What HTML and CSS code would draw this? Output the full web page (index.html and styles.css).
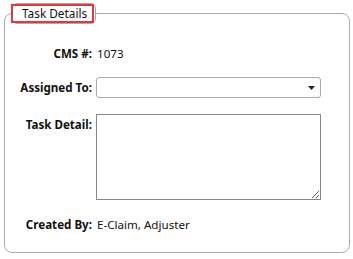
FILE: index.html
```html
<!DOCTYPE html>
<html lang="en">
<head>
  <meta charset="UTF-8" />
  <title>Task Details</title>
  <link rel="stylesheet" href="styles.css">
</head>
<body>
  <fieldset class="panel">
    <legend class="panel-title"><span class="highlight">Task Details</span></legend>

    <div class="row">
      <label class="label">CMS #:</label>
      <span class="value">1073</span>
    </div>

    <div class="row">
      <label class="label" for="assigned">Assigned To:</label>
      <div class="select">
        <svg class="caret" width="7" height="4" viewBox="0 0 7 4"><path d="M0 0h7L3.5 4z" fill="#222"/></svg>
      </div>
    </div>

    <div class="row row-top">
      <label class="label label-top" for="detail">Task Detail:</label>
      <textarea id="detail" class="detail"></textarea>
    </div>

    <div class="row">
      <label class="label">Created By:</label>
      <span class="value">E-Claim, Adjuster</span>
    </div>
  </fieldset>
</body>
</html>
```

FILE: styles.css
```css
body {
  margin: 0;
  font-family: "Noto Sans", sans-serif;
  font-size: 11.6px;
  color: #111;
  background: #fff;
}
.panel {
  box-sizing: border-box;
  width: 346px;
  height: 250px;
  margin: 3px 0 0 4px;
  padding: 21px 0 0 0;
  border: 1px solid #aaa;
  border-radius: 8px;
  display: flex;
  flex-direction: column;
  gap: 16px;
}
.panel-title {
  margin-left: 7px;
  padding: 0;
  border: 1px solid #aaa;
  border-radius: 5px;
  font-size: 11.8px;
}
.highlight {
  display: block;
  margin: 0 1px 0 -2px;
  padding: 0 5px 0 9px;
  border: 2px solid #e0393e;
  line-height: 15px;
}
.row {
  display: grid;
  grid-template-columns: 87px 225px;
  column-gap: 4px;
  align-items: center;
  min-height: 16px;
}
.row-top {
  align-items: start;
}
.label {
  text-align: right;
  font-weight: bold;
}
.label-top {
  padding-top: 3px;
}
.value {
  padding-left: 1px;
}
.select {
  box-sizing: border-box;
  height: 21px;
  border: 1px solid #aaa;
  border-radius: 3px;
  display: flex;
  justify-content: flex-end;
  align-items: center;
  padding-right: 5px;
}
.detail {
  box-sizing: border-box;
  width: 225px;
  height: 86px;
  margin: 0;
  border: 1px solid #888;
  font-family: inherit;
}
```
